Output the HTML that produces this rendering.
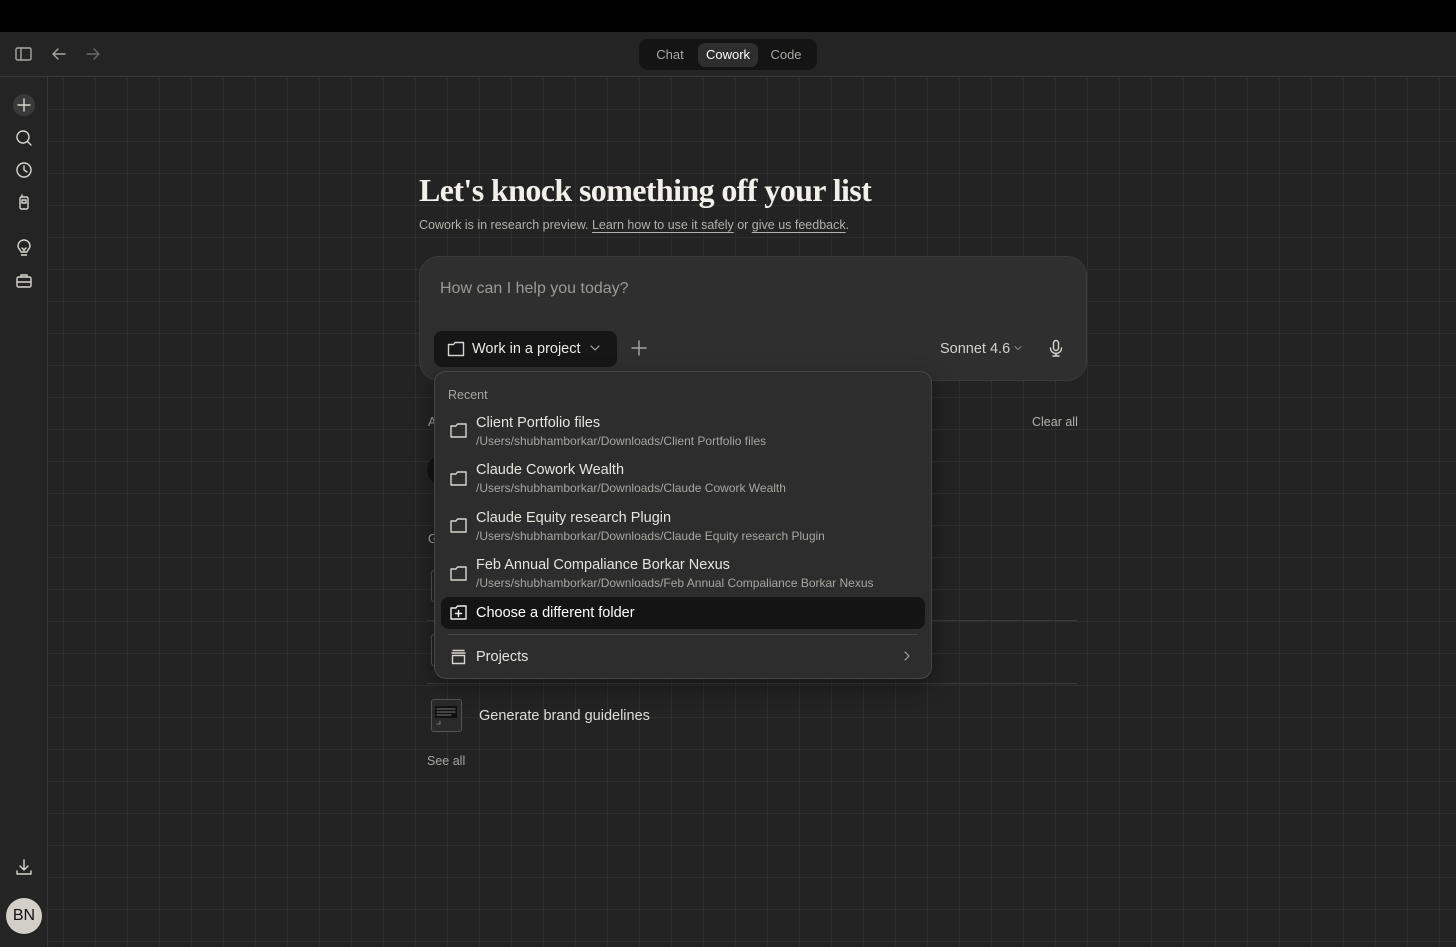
<!DOCTYPE html>
<html><head><meta charset="utf-8"><style>
*{box-sizing:border-box;margin:0;padding:0}
body{width:1456px;height:947px;overflow:hidden;background:#232322;font-family:"Liberation Sans",sans-serif;color:#e8e6e1;position:relative}
.top{position:absolute;left:0;top:0;width:1456px;height:32px;background:#000}
.hdr{position:absolute;left:0;top:32px;width:1456px;height:45px;background:#242424;border-bottom:1px solid #3a3a3a}
.side{position:absolute;left:0;top:77px;width:48px;height:870px;background:#242424;border-right:1px solid #363636}
.main{position:absolute;left:49px;top:78px;width:1407px;height:869px;background-color:#232323;
background-image:linear-gradient(to right,#2e2e2e 1px,transparent 1px),linear-gradient(to bottom,#2e2e2e 1px,transparent 1px);
background-size:32px 32px;background-position:14px 31px}
.abs{position:absolute}
svg{position:absolute;fill:none;stroke:#d8d6d0;stroke-width:1.4;stroke-linecap:round;stroke-linejoin:round}
.tabs{position:absolute;left:639px;top:39px;width:178px;height:31px;background:#141414;border-radius:9px}
.tab{position:absolute;top:4px;height:24px;line-height:24px;font-size:13px;color:#a9a7a2;text-align:center}
.item{position:absolute;left:476px;font-size:14.5px;color:#e6e4df}
.path{position:absolute;left:476px;font-size:12px;color:#a8a6a1}
</style></head><body>
<div class="top"></div>
<div class="hdr"></div>
<div class="side"></div>
<div class="main"></div>

<svg style="left:14px;top:45px" width="20" height="18" viewBox="0 0 20 18"><rect x="2" y="3" width="15" height="12" rx="1.5" stroke="#a8a6a1"/><line x1="7" y1="3" x2="7" y2="15" stroke="#a8a6a1"/></svg>
<svg style="left:50px;top:45px" width="18" height="18" viewBox="0 0 18 18"><path d="M15 9H3M8 4L3 9l5 5" stroke="#a8a6a1"/></svg>
<svg style="left:84px;top:45px" width="18" height="18" viewBox="0 0 18 18"><path d="M3 9h12M10 4l5 5-5 5" stroke="#6a6966"/></svg>

<div class="tabs">
<div class="tab" style="left:9px;width:44px">Chat</div>
<div class="tab" style="left:59px;width:60px;background:#2e2e2e;border-radius:7px;color:#fff">Cowork</div>
<div class="tab" style="left:125px;width:44px">Code</div>
</div>

<div class="abs" style="left:13px;top:94px;width:22px;height:22px;border-radius:50%;background:#3a3a3a"></div>
<svg style="left:14px;top:95px" width="20" height="20" viewBox="0 0 20 20"><path d="M10 4v12M4 10h12"/></svg>
<svg style="left:14px;top:128px" width="20" height="20" viewBox="0 0 20 20"><circle cx="9" cy="9" r="6"/><path d="M13.5 13.5L17 17"/></svg>
<svg style="left:14px;top:160px" width="20" height="20" viewBox="0 0 20 20"><circle cx="10" cy="10" r="7"/><path d="M10 6v4l3 2"/></svg>
<svg style="left:14px;top:192px" width="20" height="20" viewBox="0 0 20 20"><rect x="6" y="5" width="8" height="12" rx="1.5"/><rect x="8" y="8" width="4" height="3"/><path d="M8 5V3"/></svg>
<svg style="left:14px;top:239px" width="20" height="20" viewBox="0 0 20 20"><path d="M7 13c0-2-3-3-3-6a6 6 0 0112 0c0 3-3 4-3 6zM7.5 16h5M8 9l2 2 2-2M10 11v2"/></svg>
<svg style="left:14px;top:271px" width="20" height="20" viewBox="0 0 20 20"><rect x="3" y="6" width="14" height="10" rx="1.5"/><path d="M7 6V4h6v2M3 11h14"/></svg>
<svg style="left:14px;top:857px" width="20" height="20" viewBox="0 0 20 20"><path d="M10 3v10M6 9l4 4 4-4M3 14v3h14v-3"/></svg>
<div class="abs" style="left:6px;top:898px;width:36px;height:36px;border-radius:50%;background:#d1cfc8;color:#111;font-size:16px;text-align:center;line-height:36px">BN</div>

<div class="abs" style="left:419px;top:172px;font-family:'Liberation Serif',serif;font-weight:bold;font-size:32px;color:#f2f0eb;letter-spacing:-0.6px">Let's knock something off your list</div>
<div class="abs" style="left:419px;top:218px;font-size:12.5px;color:#b3b1ac">Cowork is in research preview. <span style="text-decoration:underline;text-underline-offset:3px">Learn how to use it safely</span> or <span style="text-decoration:underline;text-underline-offset:3px">give us feedback</span>.</div>

<div class="abs" style="left:428px;top:415px;font-size:12.5px;color:#a8a6a1">A</div>
<div class="abs" style="left:1032px;top:415px;font-size:12.5px;color:#b3b1ac">Clear all</div>
<div class="abs" style="left:427px;top:455px;width:30px;height:30px;border-radius:50%;background:#141414"></div>
<div class="abs" style="left:428px;top:532px;font-size:12.5px;color:#a8a6a1">G</div>
<div class="abs" style="left:431px;top:570px;width:30px;height:32px;border:1px solid #555;border-radius:3px"></div>
<div class="abs" style="left:427px;top:620px;width:650px;height:1px;background:#3a3a3a"></div>
<div class="abs" style="left:431px;top:634px;width:30px;height:32px;border:1px solid #555;border-radius:3px"></div>
<div class="abs" style="left:427px;top:683px;width:650px;height:1px;background:#3a3a3a"></div>
<div class="abs" style="left:431px;top:699px;width:31px;height:33px;border:1px solid #555;border-radius:3px;background:#2a2a2a"></div>
<div class="abs" style="left:435px;top:706px;width:22px;height:12px;background:#111"></div>
<svg style="left:435px;top:706px" width="24" height="24" viewBox="0 0 24 24"><path d="M2 3h18M2 6h18M2 9h14M5 15v3h-3" stroke="#777" stroke-width="1"/></svg>
<div class="abs" style="left:479px;top:708px;font-size:14.5px;color:#e0deda">Generate brand guidelines</div>
<div class="abs" style="left:427px;top:754px;font-size:12.5px;color:#a8a6a1">See all</div>

<div class="abs" style="left:419px;top:256px;width:668px;height:125px;border-radius:20px;background:#2f2f2f;border:1px solid #3a3a3a"></div>
<div class="abs" style="left:440px;top:280px;font-size:16px;color:#9c9a95">How can I help you today?</div>
<div class="abs" style="left:434px;top:331px;width:183px;height:36px;border-radius:8px;background:#161616"></div>
<svg style="left:446px;top:339px" width="20" height="20" viewBox="0 0 20 20"><path d="M2.5 5.5h5l1.5-2h8.5v13h-15z"/></svg>
<div class="abs" style="left:472px;top:341px;font-size:14.5px;color:#ecebe6">Work in a project</div>
<svg style="left:589px;top:342px" width="12" height="12" viewBox="0 0 12 12"><path d="M2 4l4 4 4-4" stroke="#a8a6a1" stroke-width="1.2"/></svg>
<svg style="left:629px;top:338px" width="20" height="20" viewBox="0 0 20 20"><path d="M10 3v14M3 10h14" stroke="#a8a6a1"/></svg>
<div class="abs" style="left:940px;top:341px;font-size:14.5px;color:#d3d1cc">Sonnet 4.6</div>
<svg style="left:1013px;top:343px" width="10" height="10" viewBox="0 0 10 10"><path d="M2 3.5l3 3 3-3" stroke="#8a8883" stroke-width="1"/></svg>
<svg style="left:1046px;top:338px" width="20" height="20" viewBox="0 0 20 20"><rect x="7.5" y="2.5" width="5" height="10" rx="2.5"/><path d="M4.5 10a5.5 5.5 0 0011 0M10 15.5v2.5M7 18h6"/></svg>

<div class="abs" style="left:434px;top:371px;width:498px;height:308px;border-radius:12px;background:#2d2d2d;border:1px solid #474747;box-shadow:0 6px 20px rgba(0,0,0,.4)"></div>
<div class="abs" style="left:448px;top:388px;font-size:12.5px;color:#a8a6a1">Recent</div>

<svg style="left:449px;top:421px" width="19" height="19" viewBox="0 0 19 19"><path d="M2 5h5l1.5-2h8.5v13h-15z"/></svg>
<div class="item" style="top:415px">Client Portfolio files</div>
<div class="path" style="top:434px">/Users/shubhamborkar/Downloads/Client Portfolio files</div>

<svg style="left:449px;top:469px" width="19" height="19" viewBox="0 0 19 19"><path d="M2 5h5l1.5-2h8.5v13h-15z"/></svg>
<div class="item" style="top:462px">Claude Cowork Wealth</div>
<div class="path" style="top:481px">/Users/shubhamborkar/Downloads/Claude Cowork Wealth</div>

<svg style="left:449px;top:516px" width="19" height="19" viewBox="0 0 19 19"><path d="M2 5h5l1.5-2h8.5v13h-15z"/></svg>
<div class="item" style="top:510px">Claude Equity research Plugin</div>
<div class="path" style="top:529px">/Users/shubhamborkar/Downloads/Claude Equity research Plugin</div>

<svg style="left:449px;top:564px" width="19" height="19" viewBox="0 0 19 19"><path d="M2 5h5l1.5-2h8.5v13h-15z"/></svg>
<div class="item" style="top:557px">Feb Annual Compaliance Borkar Nexus</div>
<div class="path" style="top:576px">/Users/shubhamborkar/Downloads/Feb Annual Compaliance Borkar Nexus</div>

<div class="abs" style="left:441px;top:597px;width:484px;height:32px;border-radius:8px;background:#141414"></div>
<svg style="left:449px;top:603px" width="19" height="19" viewBox="0 0 19 19"><path d="M2 5h5l1.5-2h8.5v13h-15zM9.5 7.5v6M6.5 10.5h6" stroke="#eee"/></svg>
<div class="item" style="top:605px;color:#fff">Choose a different folder</div>
<div class="abs" style="left:448px;top:634px;width:470px;height:1px;background:#444"></div>
<svg style="left:449px;top:647px" width="19" height="19" viewBox="0 0 19 19"><path d="M4 3.5h11M3 6h13M3.5 8.5h12v8h-12z"/></svg>
<div class="item" style="top:649px">Projects</div>
<svg style="left:900px;top:649px" width="14" height="14" viewBox="0 0 14 14"><path d="M5 3l4 4-4 4" stroke="#a8a6a1" stroke-width="1.2"/></svg>
</body></html>
